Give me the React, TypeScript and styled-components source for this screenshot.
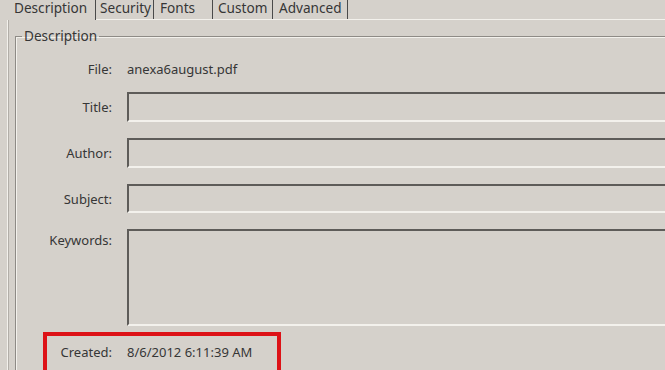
import React from "react";
import styled, { createGlobalStyle } from "styled-components";

const Global = createGlobalStyle`
  html, body { margin: 0; padding: 0; background: #d5d1cb; overflow: hidden; }
  body { font-family: "Noto Sans", "Open Sans", sans-serif; color: #363636; }
`;

const Window = styled.div`
  width: 665px;
  height: 370px;
  background: #d5d1cb;
  display: flex;
  flex-direction: column;
  overflow: hidden;
`;

const TabStrip = styled.div`
  display: flex;
  height: 19px;
  flex-shrink: 0;
  border-bottom: 1px solid #f3f1ec;
`;

const Tab = styled.div<{ $active?: boolean; $w: number; $pad: number }>`
  width: ${(p) => p.$w}px;
  height: ${(p) => (p.$active ? 20 : 19)}px;
  margin-bottom: ${(p) => (p.$active ? -1 : 0)}px;
  box-sizing: border-box;
  border-right: 1px solid #4a4a4a;
  background: #d5d1cb;
  font-size: 13.6px;
  line-height: 15px;
  padding-left: ${(p) => p.$pad}px;
  color: #363636;
  white-space: nowrap;
  position: relative;
  z-index: ${(p) => (p.$active ? 1 : 0)};
`;

const Panel = styled.div`
  flex: 1;
  margin-left: 7px;
  border-left: 1px solid #f3f1ec;
  box-shadow: inset 1px 0 0 #b2aea8;
  padding: 9px 0 0 7px;
  display: flex;
`;

const Group = styled.fieldset`
  flex: 1;
  margin: 0;
  padding: 0;
  border: none;
  border-top: 1px solid #8e8b86;
  border-left: 1px solid #8e8b86;
  box-shadow: inset 1px 1px 0 #f3f1ec;
  min-width: 0;
`;

const Legend = styled.legend`
  font-size: 13.6px;
  padding: 0 2px 0 2px;
  margin-left: 6px;
  color: #363636;
  line-height: 14px;
`;

const Rows = styled.div`
  display: flex;
  flex-direction: column;
  padding-top: 17px;
`;

const Row = styled.div<{ $gap?: number; $top?: boolean }>`
  display: flex;
  align-items: ${(p) => (p.$top ? "flex-start" : "center")};
  margin-top: ${(p) => p.$gap ?? 0}px;
`;

const Label = styled.div<{ $pad?: number }>`
  width: 96px;
  text-align: right;
  font-size: 13px;
  color: #363636;
  padding-top: ${(p) => p.$pad ?? 0}px;
  flex-shrink: 0;
`;

const Value = styled.div`
  margin-left: 15px;
  font-size: 13px;
  color: #363636;
  white-space: nowrap;
`;

const Field = styled.div<{ $h: number }>`
  margin-left: 15px;
  flex: 1;
  height: ${(p) => p.$h}px;
  box-sizing: border-box;
  border-top: 2px solid #5e5c59;
  border-left: 2px solid #5e5c59;
  border-bottom: 2px solid #f3f1ec;
  background: #d5d1cb;
`;

const Highlight = styled.div`
  display: flex;
  align-items: center;
  margin-top: 6px;
  margin-left: 27px;
  width: 238px;
  height: 40px;
  box-sizing: border-box;
  border: 4px solid #dd1217;
  border-bottom: none;
  padding-bottom: 4px;
`;

const HLabel = styled(Label)`
  width: 65px;
`;

export default function App() {
  return (
    <Window>
      <Global />
      <TabStrip>
        <Tab $active $w={96} $pad={14}>Description</Tab>
        <Tab $w={58} $pad={4}>Security</Tab>
        <Tab $w={59} $pad={6}>Fonts</Tab>
        <Tab $w={60} $pad={5}>Custom</Tab>
        <Tab $w={75} $pad={6}>Advanced</Tab>
      </TabStrip>
      <Panel>
        <Group>
          <Legend>Description</Legend>
          <Rows>
            <Row>
              <Label>File:</Label>
              <Value>anexa6august.pdf</Value>
            </Row>
            <Row $gap={14}>
              <Label>Title:</Label>
              <Field $h={30} />
            </Row>
            <Row $gap={16}>
              <Label>Author:</Label>
              <Field $h={30} />
            </Row>
            <Row $gap={16}>
              <Label>Subject:</Label>
              <Field $h={29} />
            </Row>
            <Row $gap={16} $top>
              <Label $pad={2}>Keywords:</Label>
              <Field $h={97} />
            </Row>
            <Highlight>
              <HLabel>Created:</HLabel>
              <Value>8/6/2012 6:11:39 AM</Value>
            </Highlight>
          </Rows>
        </Group>
      </Panel>
    </Window>
  );
}
